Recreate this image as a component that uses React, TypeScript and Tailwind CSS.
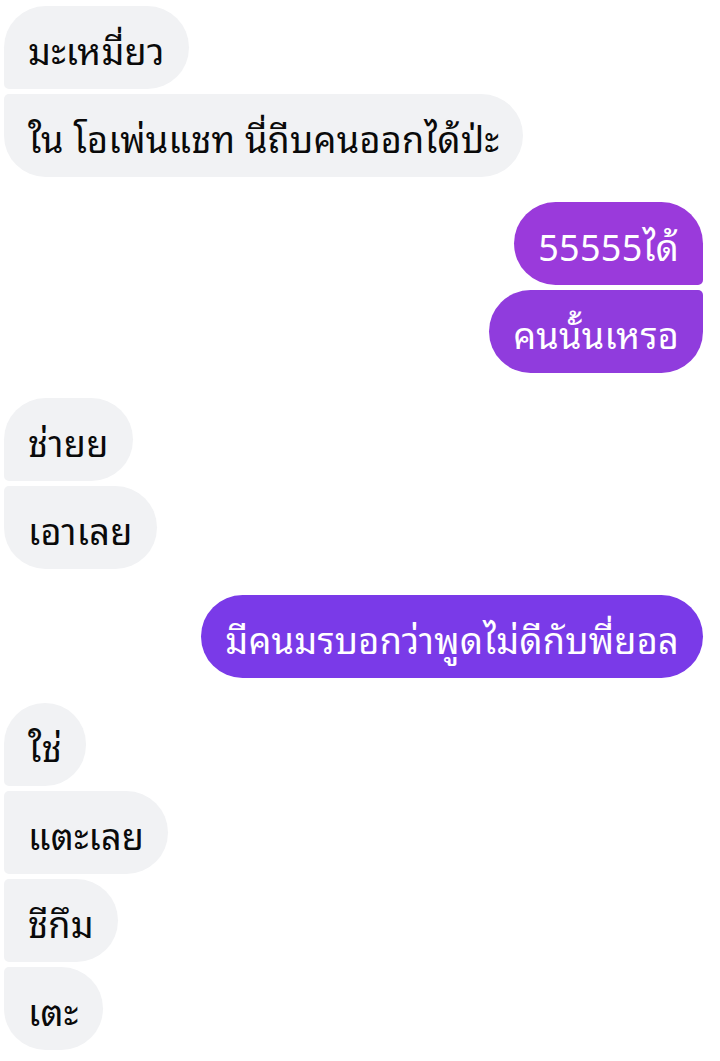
import React from "react";

type Pos = "first" | "middle" | "last" | "single";

const leftRadius: Record<Pos, string> = {
  first: "rounded-tl-[42px] rounded-bl-[5px] rounded-r-[42px]",
  middle: "rounded-l-[5px] rounded-r-[42px]",
  last: "rounded-tl-[5px] rounded-bl-[42px] rounded-r-[42px]",
  single: "rounded-[42px]",
};

const rightRadius: Record<Pos, string> = {
  first: "rounded-tr-[42px] rounded-br-[5px] rounded-l-[42px]",
  middle: "rounded-r-[5px] rounded-l-[42px]",
  last: "rounded-tr-[5px] rounded-br-[42px] rounded-l-[42px]",
  single: "rounded-[42px]",
};

function In({ text, pos }: { text: string; pos: Pos }) {
  return (
    <div className="flex justify-start">
      <div
        className={`h-[83px] flex items-center px-[24px] pt-[2px] bg-[#f1f2f4] text-[#0a0a0a] text-[36px] leading-[44px] tracking-[0.3px] whitespace-nowrap ${leftRadius[pos]}`}
      >
        {text}
      </div>
    </div>
  );
}

function Out({ text, pos, color }: { text: string; pos: Pos; color: string }) {
  return (
    <div className="flex justify-end">
      <div
        className={`h-[83px] flex items-center px-[24px] pt-[2px] text-white text-[36px] leading-[44px] tracking-[0.3px] whitespace-nowrap ${color} ${rightRadius[pos]}`}
      >
        {text}
      </div>
    </div>
  );
}

export default function App() {
  return (
    <div className="w-[720px] h-[1061px] bg-white overflow-hidden pl-[4px] pr-[17px] pt-[6px] font-['Noto_Sans_Thai_Looped','Noto_Sans_Thai',sans-serif]">
      <div className="flex flex-col gap-[5px]">
        <In text="มะเหมี่ยว" pos="first" />
        <In text="ใน โอเพ่นแชท นี่ถีบคนออกได้ป่ะ" pos="last" />
      </div>
      <div className="flex flex-col gap-[5px] mt-[25px]">
        <Out text="55555ได้" pos="first" color="bg-[#9a3adb]" />
        <Out text="คนนั้นเหรอ" pos="last" color="bg-[#903cdd]" />
      </div>
      <div className="flex flex-col gap-[5px] mt-[25px]">
        <In text="ช่ายย" pos="first" />
        <In text="เอาเลย" pos="last" />
      </div>
      <div className="flex flex-col gap-[5px] mt-[26px]">
        <Out text="มีคนมรบอกว่าพูดไม่ดีกับพี่ยอล" pos="single" color="bg-[#7a3ae8]" />
      </div>
      <div className="flex flex-col gap-[5px] mt-[25px]">
        <In text="ใช่" pos="first" />
        <In text="แตะเลย" pos="middle" />
        <In text="ชีกึม" pos="middle" />
        <In text="เตะ" pos="last" />
      </div>
    </div>
  );
}
